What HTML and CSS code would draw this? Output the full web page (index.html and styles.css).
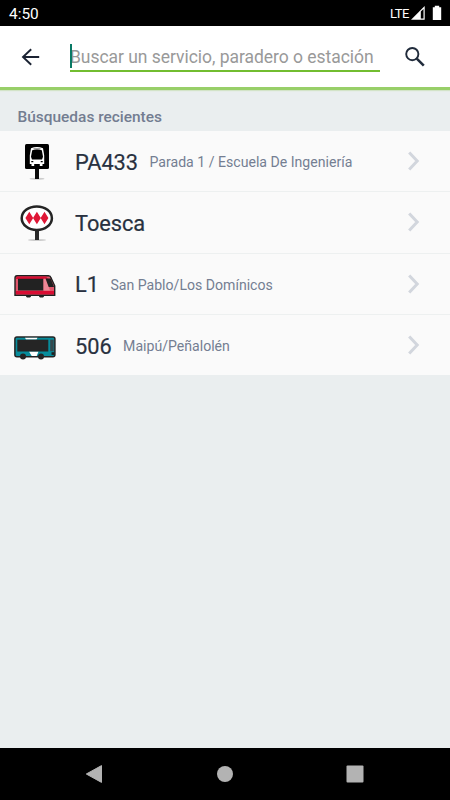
FILE: index.html
```html
<!DOCTYPE html>
<html lang="es">
<head>
<meta charset="utf-8">
<title>Buscar</title>
<link rel="stylesheet" href="styles.css">
</head>
<body>
<div class="screen">
  <div class="status">
    <span class="time">4:50</span>
    <span class="network">LTE</span>
    <svg class="status-icons" width="34" height="16" viewBox="0 0 34 16">
      <path d="M1 14.7 14.7 1v13.7z" fill="#fff"/>
      <path d="M10.8 6.5 13.5 3.9v9.5h-2.7z" fill="#000"/>
      <path d="M22.8 2.2h2V.7h4.4v1.5h2V15h-8.4z" fill="#fff"/>
    </svg>
  </div>
  <header class="header">
    <svg class="back" width="20" height="20" viewBox="0 0 20 20"><path d="M18.2 10H2M10.2 2.2 2 10l8.2 7.8" fill="none" stroke="#1b2333" stroke-width="1.9"/></svg>
    <div class="field"><span class="cursor"></span><span class="placeholder">Buscar un servicio, paradero o estación</span></div>
    <svg class="search" width="22" height="22" viewBox="0 0 22 22"><circle cx="8.3" cy="8.1" r="6.1" fill="none" stroke="#202b3b" stroke-width="1.9"/><path d="m12.8 12.6 7 7" stroke="#202b3b" stroke-width="2.6"/></svg>
  </header>
  <main class="content">
    <h1 class="label">Búsquedas recientes</h1>
    <ul class="list">
      <li class="row">
        <svg class="icon" width="50" height="50" viewBox="0 0 50 50">
          <ellipse cx="27" cy="38.8" rx="7.5" ry="1" fill="#ccc"/>
          <path d="M25 27h4v12h-4z" fill="#080808"/>
          <rect x="15" y="4" width="24" height="25" rx="1.5" fill="#000"/>
          <path d="M21 8.2q6-2.2 12 0l1.2 7V24h-1.7v2h-2.7v-2h-5.6v2h-2.7v-2h-1.7v-8.8z" fill="#fff"/>
          <path d="M22.2 10.3q4.8-1.5 9.6 0l1.2 6.4-1 2.8H22l-1-2.8z" fill="#000"/>
          <path d="M23.5 8.9h7" stroke="#000" stroke-width=".6"/>
          <path d="M21.3 21.7h2m7.4 0h2" stroke="#000" stroke-width="1.2"/>
        </svg>
        <span class="name">PA433</span><span class="detail">Parada 1 / Escuela De Ingeniería</span>
        <svg class="chevron" width="14" height="20" viewBox="0 0 14 20"><path d="m2.2 1.5 8 8.5-8 8.5" fill="none" stroke="#d2d6dd" stroke-width="3"/></svg>
      </li>
      <li class="row">
        <svg class="icon" width="50" height="50" viewBox="0 0 50 50">
          <ellipse cx="27" cy="39" rx="9" ry="1" fill="#ccc"/>
          <path d="M25 28h4v11h-4z" fill="#292929"/>
          <ellipse cx="26.8" cy="17.2" rx="15.1" ry="11.8" fill="#fff" stroke="#252525" stroke-width="2.5"/>
          <path d="m19.3 10.8 3.9 6.2-3.9 6.2-3.9-6.2zM26.9 10.8l3.9 6.2-3.9 6.2-3.9-6.2zM34.5 10.8l3.9 6.2-3.9 6.2-3.9-6.2z" fill="#df1736"/>
        </svg>
        <span class="name">Toesca</span>
        <svg class="chevron" width="14" height="20" viewBox="0 0 14 20"><path d="m2.2 1.5 8 8.5-8 8.5" fill="none" stroke="#d2d6dd" stroke-width="3"/></svg>
      </li>
      <li class="row">
        <svg class="icon vehicle" width="50" height="50" viewBox="0 0 50 50">
          <path d="M16 32h5v1.5l-1 1h-3l-1-1zM29 32h5v1.5l-1 1h-3l-1-1z" fill="#222"/>
          <path d="M7 12.8h31.5q2 0 2.5 2l3.7 8v9.5H5V15q0-2.2 2-2.2z" fill="#e0566b" stroke="#202020" stroke-width="1.4"/>
          <path d="M6 15q0-1.5 1.5-1.5H36l2 2.4H6zM6 28h38v3.3H6z" fill="#d90d33"/>
          <path d="M8 15.8h25.5v11.7H8z" fill="#222"/>
          <path d="M33.5 15.8h2.7l3.8 11.7h-6.5z" fill="#ee8796"/>
          <path d="M35.5 15.5h5.2l3.4 8.5h-5.4z" fill="#202020"/>
        </svg>
        <span class="name">L1</span><span class="detail">San Pablo/Los Domínicos</span>
        <svg class="chevron" width="14" height="20" viewBox="0 0 14 20"><path d="m2.2 1.5 8 8.5-8 8.5" fill="none" stroke="#d2d6dd" stroke-width="3"/></svg>
      </li>
      <li class="row">
        <svg class="icon" width="50" height="50" viewBox="0 0 50 50">
          <rect x="4.9" y="12.9" width="40" height="19.8" rx="2" fill="#078c9b" stroke="#242424" stroke-width="1.5"/>
          <path d="M15 13.7h12.5l-1 1.8H16zM19 27.5h9.5l-1.8 4.4h-5z" fill="#fff"/>
          <path d="M7.3 15.7h31v11.8h-31z" fill="#252525"/>
          <path d="M40.2 15.7h3.5v11.5h-3.5z" fill="#34494e"/>
          <path d="M41.5 28.2h2.8v2.7h-2.8z" fill="#202020"/>
          <circle cx="13" cy="32.6" r="3" fill="#242424"/><circle cx="31" cy="32.6" r="3" fill="#242424"/>
        </svg>
        <span class="name">506</span><span class="detail">Maipú/Peñalolén</span>
        <svg class="chevron" width="14" height="20" viewBox="0 0 14 20"><path d="m2.2 1.5 8 8.5-8 8.5" fill="none" stroke="#d2d6dd" stroke-width="3"/></svg>
      </li>
    </ul>
  </main>
  <nav class="nav">
    <svg width="18" height="18" viewBox="0 0 18 18"><path d="M1.3 9 16.5.6v16.8z" fill="#b3b3b3" stroke="#b3b3b3" stroke-linejoin="round"/></svg>
    <svg width="18" height="18" viewBox="0 0 18 18"><circle cx="9" cy="9" r="8" fill="#b3b3b3"/></svg>
    <svg width="18" height="18" viewBox="0 0 18 18"><rect x=".5" y=".5" width="17" height="17" rx="1" fill="#b3b3b3"/></svg>
  </nav>
</div>
</body>
</html>
```
FILE: styles.css
```css
* { box-sizing: border-box; }
body { margin: 0; font-family: Roboto, sans-serif; }
.screen { width: 450px; height: 800px; display: flex; flex-direction: column; background: #eaeeef; overflow: hidden; white-space: nowrap; }
.status { height: 26px; flex: none; background: #000; color: #fff; display: flex; align-items: center; padding: 2px 8px 0 9px; font-size: 15.4px; }
.time { flex: 1; }
.network { font-size: 13px; width: 20px; letter-spacing: -.5px; margin-top: -2px; }
.status-icons { width: 34px; height: 16px; margin: -2px -2px 0 0; }
.header { height: 64px; flex: none; background: #fff; display: flex; align-items: flex-start; border-bottom: 3px solid #98cf68; box-shadow: 0 1px 1px #d3e3c8; position: relative; }
.back { margin: 21px 0 0 21px; }
.field { position: relative; width: 310px; height: 46px; margin-left: 29px; padding-top: 20px; border-bottom: 2px solid #72bd30; font-size: 17.5px; line-height: 22px; color: #999; letter-spacing: -.04px; }
.cursor { position: absolute; left: 0; top: 18px; width: 2px; height: 24px; background: #087965; }
.search { margin: 20px 0 0 24px; }
.content { flex: 1; }
.label { height: 41px; margin: 0; padding: 17px 17.5px 0; color: #737d91; font-size: 15.45px; font-weight: 500; line-height: 20px; }
.list { margin: 0; padding: 0; list-style: none; }
.row { height: 61.25px; display: flex; align-items: center; background: #fafafa; border-bottom: 1.5px solid #edf0f0; padding: 0 29px 0 10px; }
.row:last-child { height: 60.5px; border-bottom: 0; }
.icon { flex: none; margin: 8px 15px 0 0; }
.vehicle { margin-top: 8px; }
.name { font-size: 21.8px; line-height: 28px; color: #283140; margin-top: 3px; -webkit-text-stroke: .2px #283140; letter-spacing: -.05px; }
.detail { font-size: 14.1px; line-height: 20px; color: #747e92; margin-left: 11.5px; margin-top: 2px; }
.chevron { margin: 0 0 0 auto; }
.nav { height: 52px; flex: none; background: #000; display: flex; align-items: center; justify-content: space-between; padding: 0 86px 0 85px; }
```
